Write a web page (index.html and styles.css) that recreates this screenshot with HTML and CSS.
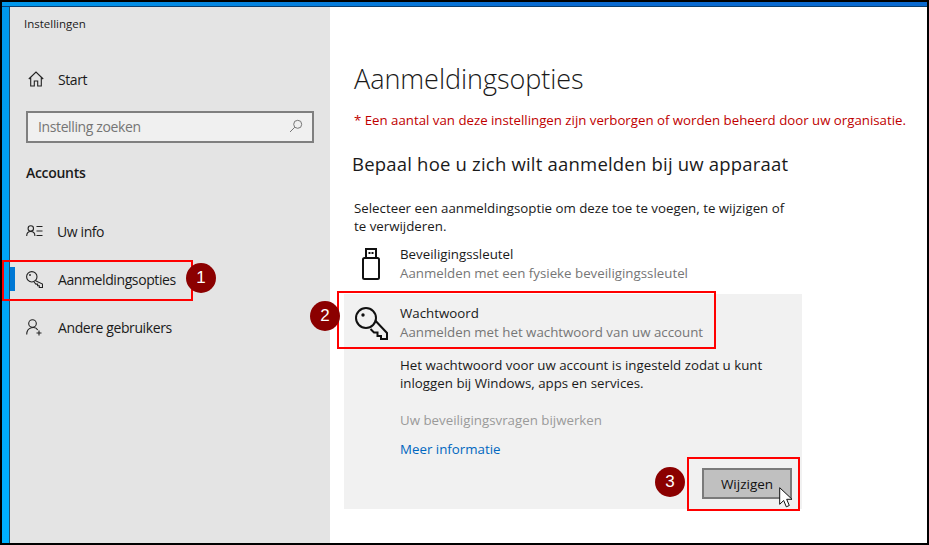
FILE: index.html
```html
<!DOCTYPE html>
<html lang="nl">
<head>
    <meta charset="UTF-8">
    <meta name="viewport" content="width=device-width, initial-scale=1.0">
    <title>Instellingen</title>
    <link rel="stylesheet" href="styles.css">
</head>
<body>
    <div class="frame">
        <div class="window">
            <!-- Zijbalk -->
            <aside class="sidebar">
                <div class="app-title">Instellingen</div>
                <div class="nav-item nav-start">
                    <svg class="nav-icon" viewBox="0 0 16 16" width="16" height="16"><path d="M.8 8 8 1l7.200 7M2.700 6.300V15h3.600v-5h3.400v5h3.600V6.300"/></svg>
                    <span>Start</span>
                </div>
                <div class="search">
                    <span>Instelling zoeken</span>
                    <svg viewBox="0 0 14 14" width="14" height="14"><circle cx="8.700" cy="5.300" r="4"/><path d="M5.800 8.200 1 13"/></svg>
                </div>
                <div class="section-title">Accounts</div>
                <div class="nav-item nav-info">
                    <svg class="nav-icon" viewBox="0 0 17 12" width="17" height="12"><circle cx="4.800" cy="3.400" r="2.700"/><path d="M.7 11c0-6 8.200-6 8.200 0M10.500 1.500h6M10.500 6h6M10.500 10.500h6"/></svg>
                    <span>Uw info</span>
                </div>
                <div class="nav-item nav-active">
                    <svg class="nav-icon" viewBox="0 0 17 17" width="17" height="17"><circle cx="5.800" cy="5.800" r="5.200"/><path d="M9.600 9.700 16.500 13v3.500h-3.200v-1.700h-1.700v-1.700H9.900L8 11"/><circle cx="4" cy="4" r=".4"/></svg>
                    <span>Aanmeldingsopties</span>
                </div>
                <div class="nav-item nav-users">
                    <svg class="nav-icon" viewBox="0 0 17 17" width="17" height="17"><circle cx="6.500" cy="4.500" r="3.800"/><path d="M.7 15.500c0-8 9-8.500 11-4.500M13 11.500v5M10.500 14h5"/></svg>
                    <span>Andere gebruikers</span>
                </div>
            </aside>

            <!-- Inhoud -->
            <main class="content">
                <h1>Aanmeldingsopties</h1>
                <p class="warning">* Een aantal van deze instellingen zijn verborgen of worden beheerd door uw organisatie.</p>
                <h2>Bepaal hoe u zich wilt aanmelden bij uw apparaat</h2>
                <p class="intro">Selecteer een aanmeldingsoptie om deze toe te voegen, te wijzigen of te verwijderen.</p>

                <div class="option option-first">
                    <div class="icon-slot">
                        <svg class="option-icon" viewBox="0 0 20 32" width="20" height="32"><rect x="5" y="1" width="10" height="9"/><rect x="2" y="10" width="16" height="21" rx="1.500"/><path class="fill" d="M7.500 4h2v2h-2zM10.500 4h2v2h-2z"/></svg>
                    </div>
                    <div class="option-text">
                        <div>Beveiligingssleutel</div>
                        <div class="muted">Aanmelden met een fysieke beveiligingssleutel</div>
                    </div>
                </div>

                <div class="panel">
                    <div class="option">
                        <div class="icon-slot">
                            <svg class="option-icon" viewBox="0 0 33 33" width="33" height="33"><path d="M20 13.200 32 26v6h-6v-3h-3.500v-3.500H19L15.500 22"/><circle cx="11" cy="11" r="10"/><circle class="fill" cx="8" cy="8" r="1.700"/></svg>
                        </div>
                        <div class="option-text">
                            <div>Wachtwoord</div>
                            <div class="muted">Aanmelden met het wachtwoord van uw account</div>
                        </div>
                    </div>
                    <div class="panel-body">
                        <p>Het wachtwoord voor uw account is ingesteld zodat u kunt inloggen bij Windows, apps en services.</p>
                        <div class="disabled">Uw beveiligingsvragen bijwerken</div>
                        <div class="link">Meer informatie</div>
                        <div class="actions"><button class="button">Wijzigen</button></div>
                    </div>
                </div>
            </main>
        </div>

        <!-- Markeringen over de schermafbeelding -->
        <div class="mark mark-1"></div>
        <div class="mark mark-2"></div>
        <div class="mark mark-3"></div>
        <div class="badge badge-1">1</div>
        <div class="badge badge-2">2</div>
        <div class="badge badge-3">3</div>
        <svg class="cursor" viewBox="0 0 13 21" width="13" height="21"><path d="M.7.7v16.600l4-3.800 2.600 6.300 3-1.300-2.600-6.200h5.400Z"/></svg>
    </div>
</body>
</html>
```
FILE: styles.css
```css
html, body {
    margin: 0;
    padding: 0;
    background: #fff;
}
body {
    font-family: "Open Sans", "Noto Sans", sans-serif;
    color: #1a1a1a;
    overflow: hidden;
}
.frame {
    position: relative;
    box-sizing: border-box;
    width: 929px;
    height: 545px;
    border: 2px solid #000;
    background: linear-gradient(180deg, #0098ec, #00b0ff);
    padding: 5px 0 0 8px;
    overflow: hidden;
}
.frame::before {
    content: "";
    position: absolute;
    top: 0;
    left: 0;
    right: 0;
    height: 4px;
    border-bottom: 1px solid #0a3f70;
    background: linear-gradient(90deg, #0098ec, #0a6ad0 60%);
}
.window {
    display: flex;
    height: 100%;
    background: #fff;
}
.sidebar {
    position: relative;
    width: 320px;
    flex: none;
    background: #e4e4e4;
    border-left: 1px solid #1f4f6e;
    margin-left: -1px;
    font-size: 14px;
}
.app-title {
    font-size: 11.5px;
    padding: 9px 0 0 14px;
    height: 31px;
}
.nav-item {
    display: flex;
    align-items: center;
    height: 48px;
    padding-left: 16px;
}
.nav-item span {
    letter-spacing: -0.4px;
}
.nav-icon {
    flex: none;
    margin-right: 15px;
    fill: none;
    stroke: #222;
    stroke-width: 1.1;
}
.nav-start {
    margin-top: 8px;
    padding-left: 18px;
}
.nav-start .nav-icon {
    margin-right: 14px;
}
.search {
    box-sizing: border-box;
    display: flex;
    align-items: center;
    justify-content: space-between;
    width: 288px;
    height: 32px;
    margin: 8px 0 0 16px;
    padding: 0 9px 2px 10px;
    border: 2px solid #7f7f7f;
    background: #f0f0f0;
    color: #757575;
    font-size: 14px;
    letter-spacing: -0.38px;
}
.search svg {
    fill: none;
    stroke: #777;
}
.section-title {
    font-weight: 600;
    font-size: 14px;
    letter-spacing: -0.3px;
    margin: 20px 0 0 16px;
    height: 35px;
}
.nav-info {
    margin-top: 9px;
}
.nav-info .nav-icon {
    margin-right: 14px;
}
/* barra azul do item ativo */
.nav-active::before {
    content: "";
    position: absolute;
    left: 0;
    width: 5px;
    height: 24px;
    background: #0078d4;
}
.content {
    flex: 1;
    padding-left: 24px;
}
h1 {
    margin: 52px 0 0;
    font-size: 27px;
    font-weight: 300;
    line-height: 40px;
    letter-spacing: -0.05px;
}
.warning {
    margin: 12px 0 0;
    font-size: 13.25px;
    line-height: 18px;
    color: #c00000;
}
h2 {
    margin: 22px 0 0 -2px;
    font-size: 18.5px;
    font-weight: 400;
    line-height: 26px;
    letter-spacing: 0.2px;
}
.intro {
    margin: 22px 0 0;
    width: 440px;
    font-size: 13.3px;
    line-height: 18px;
}
.option {
    display: flex;
    align-items: center;
    height: 50px;
    font-size: 13.3px;
    line-height: 19px;
}
.option-first {
    margin: 4px 0 5px;
}
.icon-slot {
    display: flex;
    justify-content: center;
    flex: none;
    width: 34px;
}
.option-icon {
    fill: none;
    stroke: #111;
    stroke-width: 2;
}
.option-icon .fill {
    fill: #111;
    stroke: none;
}
.option-text {
    margin-left: 12px;
}
.muted {
    color: #767676;
}
.panel {
    box-sizing: border-box;
    width: 458px;
    margin-left: -10px;
    padding: 4px 0 10px;
    background: #f1f1f1;
}
.panel .option {
    padding-left: 10px;
}
.panel-body {
    padding: 8px 0 0 56px;
    font-size: 13.3px;
    line-height: 19px;
}
.panel-body p {
    margin: 0;
    width: 380px;
    line-height: 18px;
}
.disabled {
    margin-top: 19px;
    color: #9a9a9a;
}
.link {
    margin-top: 10px;
    color: #0067c0;
}
.actions {
    display: flex;
    justify-content: flex-end;
    padding-right: 10px;
    margin-top: 9px;
}
.button {
    box-sizing: border-box;
    width: 90px;
    height: 31px;
    padding: 0;
    border: 2px solid #7a7a7a;
    background: #c0c0c0;
    color: #111;
    font-family: inherit;
    font-size: 13.5px;
}
.mark {
    position: absolute;
    box-sizing: border-box;
    border: 2px solid #f00;
}
.mark-1 {
    left: 0;
    top: 258px;
    width: 191px;
    height: 41px;
}
.mark-2 {
    left: 335px;
    top: 289px;
    width: 379px;
    height: 58px;
}
.mark-3 {
    left: 685px;
    top: 455px;
    width: 113px;
    height: 54px;
}
.badge {
    position: absolute;
    width: 30px;
    height: 30px;
    border-radius: 50%;
    background: #8b0000;
    color: #fff;
    font-family: "Liberation Sans", sans-serif;
    font-size: 17px;
    line-height: 30px;
    text-align: center;
}
.badge-1 { left: 184px; top: 261px; }
.badge-2 { left: 308px; top: 299px; }
.badge-3 { left: 653px; top: 465px; }
.cursor {
    position: absolute;
    left: 777px;
    top: 485px;
    fill: #fff;
    stroke: #111;
    stroke-width: 1;
}
```
